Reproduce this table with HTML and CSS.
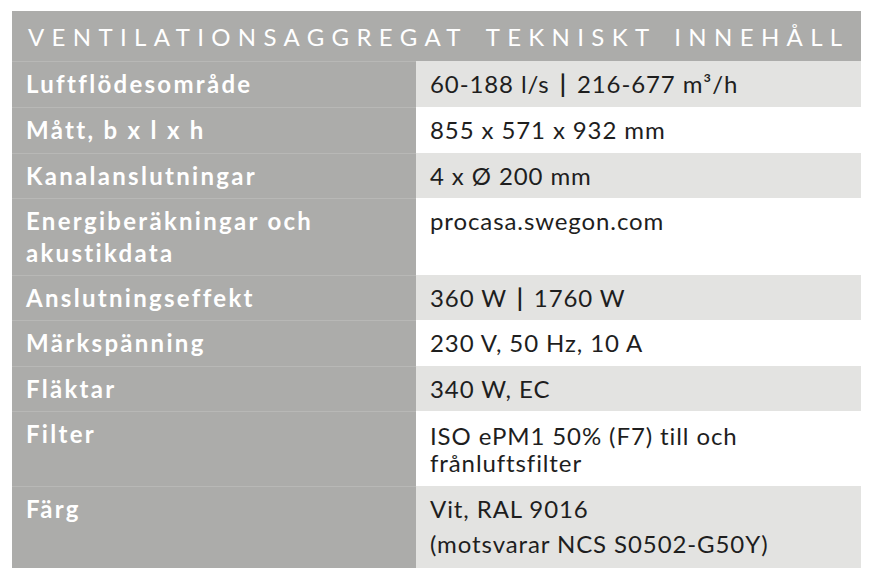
FILE: index.html
```html
<!DOCTYPE html>
<html lang="sv">
<head>
<meta charset="utf-8">
<link rel="stylesheet" href="styles.css">
</head>
<body>
<div class="spec">
  <div class="spec-head">VENTILATIONSAGGREGAT <span class="gap"></span>TEKNISKT <span class="gap"></span>INNEHÅLL</div>
  <div class="row shade">
    <div class="label">Luftflödesområde</div>
    <div class="value">60-188 l/s <span class="bar">|</span> 216-677 m³/h</div>
  </div>
  <div class="row">
    <div class="label">Mått, b x l x h</div>
    <div class="value">855 x 571 x 932 mm</div>
  </div>
  <div class="row shade short">
    <div class="label">Kanalanslutningar</div>
    <div class="value">4 x Ø 200 mm</div>
  </div>
  <div class="row tall">
    <div class="label two">Energiberäkningar och<br>akustikdata</div>
    <div class="value">procasa.swegon.com</div>
  </div>
  <div class="row shade short">
    <div class="label">Anslutningseffekt</div>
    <div class="value">360 W <span class="bar">|</span> 1760 W</div>
  </div>
  <div class="row">
    <div class="label">Märkspänning</div>
    <div class="value">230 V, 50 Hz, 10 A</div>
  </div>
  <div class="row shade short">
    <div class="label">Fläktar</div>
    <div class="value">340 W, EC</div>
  </div>
  <div class="row filter">
    <div class="label">Filter</div>
    <div class="value tight">ISO ePM1 50% (F7) till och<br>frånluftsfilter</div>
  </div>
  <div class="row shade color">
    <div class="label">Färg</div>
    <div class="value loose">Vit, RAL 9016<br>(motsvarar NCS S0502-G50Y)</div>
  </div>
</div>
</body>
</html>
```

FILE: styles.css
```css
html, body {
  margin: 0;
  padding: 0;
  background: #ffffff;
}

body {
  font-family: "Lato", "Liberation Sans", sans-serif;
}

.spec {
  margin: 11px 0 0 12px;
  width: 849px;
}

.spec-head {
  background: #acacaa;
  color: #ffffff;
  height: 50px;
  line-height: 52px;
  padding-left: 16px;
  font-size: 24px;
  font-weight: 400;
  letter-spacing: 7.35px;
  white-space: nowrap;
  overflow: hidden;
}

.spec-head .gap {
  display: inline-block;
  width: 5px;
}

.row {
  display: grid;
  grid-template-columns: 404px 445px;
  height: 46px;
}

.row.short {
  height: 45px;
}

.label {
  background: #acacaa;
  color: #ffffff;
  font-weight: 700;
  font-size: 24px;
  line-height: 30px;
  padding: 7px 10px 0 14px;
  border-top: 1px solid #b8b8b6;
  letter-spacing: 2.3px;
  white-space: nowrap;
}

.label.two {
  line-height: 32px;
  padding-top: 6px;
}

.value {
  background: #ffffff;
  color: #1e1e1e;
  font-size: 24px;
  line-height: 30px;
  padding: 8px 10px 0 14px;
  letter-spacing: 0.9px;
  white-space: nowrap;
}

.row.shade .value {
  background: #e3e3e1;
}

.bar {
  font-weight: 700;
  margin: 0 3px;
}

.row.tall {
  height: 77px;
}

.row.filter {
  height: 75px;
}

.value.tight {
  line-height: 27px;
  padding-top: 11px;
}

.row.color {
  height: 82px;
}

.value.loose {
  line-height: 35px;
  padding-top: 5px;
}
```
